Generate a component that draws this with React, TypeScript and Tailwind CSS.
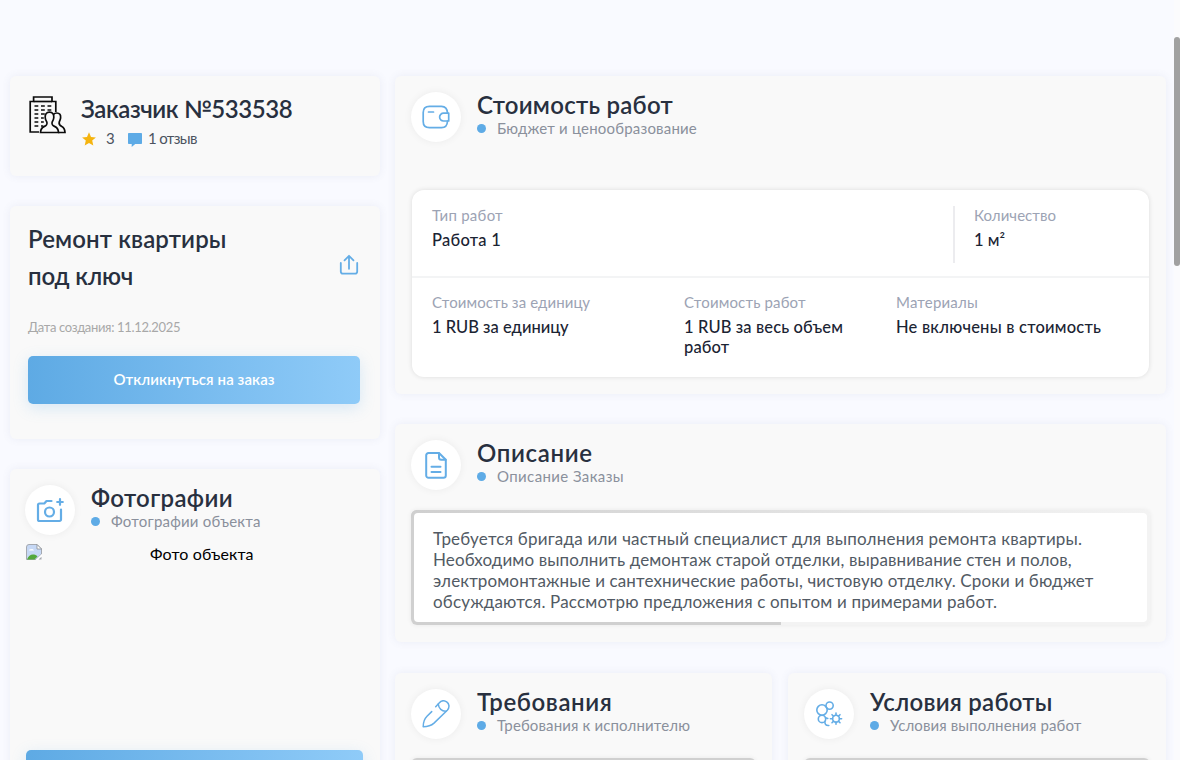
import type { ReactNode } from 'react'

const description = [
  { text: 'Требуется бригада или частный специалист для выполнения ремонта квартиры.', tracking: 'tracking-[0.21px]' },
  { text: 'Необходимо выполнить демонтаж старой отделки, выравнивание стен и полов,', tracking: 'tracking-[0.1px]' },
  { text: 'электромонтажные и сантехнические работы, чистовую отделку. Сроки и бюджет', tracking: 'tracking-[0.12px]' },
  { text: 'обсуждаются. Рассмотрю предложения с опытом и примерами работ.', tracking: 'tracking-[0.17px]' },
]

function BuildingIcon() {
  return (
    <svg width="40" height="40" viewBox="0 0 40 40" fill="none" stroke="#0b0b0b" strokeWidth="1.7">
      <path d="M11 37H2.200V6.500H5.600V2H24V6.500H27.800V17" />
      <path d="M5.600 6.500H24" />
      <path d="M6.500 11h3.800M13 11h3.800M19.500 11h3.800M6.500 15h3.800M13 15h3.800M19.500 15h3.800M6.500 19h3.800M13 19h3.800M6.500 23h3.800M13 23h2.800M6.500 27h3.800M13 27h2.800M6.500 31h3.800M13 31h2.300" strokeWidth="1.6" />
      <path d="M21.500 17.200c-3.200 0-4.600 2.300-4.300 5.300.2 2.500 1.200 3.500 1.700 4.800.5 2.600-.4 3.200-2.900 4.300-2.500 1.100-3.300 2.500-3.500 5.900H30.500c-.2-3.400-1-4.800-3.500-5.900-2.500-1.100-3.400-1.700-2.900-4.300.5-1.300 1.500-2.300 1.700-4.800.3-3-1.100-5.300-4.300-5.300Z" />
      <path d="M25.500 19.500c1-1.200 2.100-1.500 3.200-1.500 3 0 4.200 2 3.900 4.900-.2 2.100-1 3-1.400 4.300-.5 2.400.2 3.200 2.600 4.400 2.200 1.100 3 2.600 3.200 5.900H30" />
    </svg>
  )
}

function StarIcon() {
  return (
    <svg width="14" height="14" viewBox="0 0 14 14" fill="#f5b40f">
      <path d="M7 .3 9 5l4.900.4-3.700 3.200 1.100 4.900L7 10.900l-4.300 2.600 1.100-4.900L.1 5.400 5 5Z" />
    </svg>
  )
}

function CommentIcon() {
  return (
    <svg width="14" height="14" viewBox="0 0 14 14" fill="#5eabe6">
      <path d="M.8 0h12.400a.8.8 0 0 1 .8.800v9.400a.8.8 0 0 1-.8.800H7.200L3.700 14v-3H.8a.8.8 0 0 1-.8-.8V.8A.8.800 0 0 1 .8 0Z" />
    </svg>
  )
}

function ShareIcon() {
  return (
    <svg width="20" height="22" viewBox="0 0 20 22" fill="none" stroke="#64ade6" strokeWidth="1.800" strokeLinecap="round" strokeLinejoin="round">
      <path d="M1.800 9v8.500a2.200 2.200 0 0 0 2.200 2.200h12a2.200 2.200 0 0 0 2.200-2.200V9" />
      <path d="M10 14.800V2M5.500 6.300 10 1.800l4.500 4.500" />
    </svg>
  )
}

function WalletIcon() {
  return (
    <svg width="28" height="24" viewBox="0 0 28 24" fill="none" stroke="#64ade6" strokeWidth="1.700" strokeLinecap="round" strokeLinejoin="round">
      <path d="M25.500 8.200C25.300 3.500 23.800 1.300 19.500 1.300H7.500C3 1.300 1.200 3.200 1.200 7.500v9c0 4.300 1.800 6.200 6.300 6.200h12c4.300 0 5.800-2.100 6-6.700" />
      <path d="M26.700 8.200h-5.200a3.900 3.900 0 0 0 0 7.800h5.200Z" />
      <path d="M6.500 7h5" />
    </svg>
  )
}

function DocIcon() {
  return (
    <svg width="22" height="27" viewBox="0 0 22 27" fill="none" stroke="#64ade6" strokeWidth="2" strokeLinecap="round" strokeLinejoin="round">
      <path d="M14 1H3.500A2.300 2.300 0 0 0 1.200 3.300v20.200a2.300 2.300 0 0 0 2.300 2.300h15a2.300 2.300 0 0 0 2.300-2.300V7.800Z" />
      <path d="M14 1.200v4.300a2.300 2.300 0 0 0 2.300 2.300h4.300M6.500 14.800h9M6.500 19.900h9" />
    </svg>
  )
}

function CameraIcon() {
  return (
    <svg width="28" height="25" viewBox="0 0 28 25" fill="none" stroke="#64ade6" strokeWidth="2.200" strokeLinecap="round" strokeLinejoin="round">
      <path d="M15.500 3h-5L8.300 5.500H3.500A1.500 1.500 0 0 0 2 7v14.500A1.500 1.500 0 0 0 3.500 23h20a1.500 1.500 0 0 0 1.500-1.500V11.500" />
      <circle cx="13.500" cy="14" r="4.500" />
      <path d="M24 1.200v5.600M21.200 4h5.600" />
    </svg>
  )
}

function PencilIcon() {
  return (
    <svg width="28" height="28" viewBox="0 0 28 28" fill="none" stroke="#64ade6" strokeWidth="1.500" strokeLinecap="round" strokeLinejoin="round">
      <path d="M9.700 11.600 5 16.300C2.300 19 1.200 22.200 1.200 26.700c4.800 0 7.900-1 10.800-3.600L25.300 10.200c2.600-2.800 2-6.500-.6-8.300-2.600-1.700-5.700-1.100-7.600 1.100L13.700 6.700" />
      <path d="M16.300 4c.3 4.600 3.600 7.500 8 7.100" />
    </svg>
  )
}

function GearsIcon() {
  return (
    <svg width="28" height="26" viewBox="0 0 28 26" fill="none" stroke="#64ade6" strokeWidth="1.600" strokeLinecap="round">
      <circle cx="7" cy="9" r="5.200" />
      <circle cx="14.600" cy="4.600" r="3.600" />
      <circle cx="7" cy="17.900" r="3.700" />
      <path d="M10 20.200c-.6 2.800.9 4.600 3.800 4.300M10.500 16.800l2.300.6" />
      <circle cx="21" cy="17.700" r="3.400" />
      <path d="M21 14.300v-2.200M21 21.100v2.200M17.600 17.700h-2.200M24.400 17.700h2.200M18.600 15.300 17 13.700M23.400 15.300 25 13.700M18.600 20.100 17 21.700M23.400 20.100l1.600 1.600" />
    </svg>
  )
}

function BrokenImageIcon() {
  return (
    <svg width="16" height="16" viewBox="0 0 16 16">
      <path d="M3 .5h8l4.500 4.500v5L10 15.500H.5V3A2.500 2.500 0 0 1 3 .5Z" fill="#c6d8f5" stroke="#a5a9b0" />
      <path d="M3 6.500a1.500 1.500 0 0 1 2-1.200 2 2 0 0 1 3 1.200Z" fill="#fff" />
      <path d="M1 15.500c1.500-4 4-5.500 7-5 1.600.3 2.600 1 3.500 2L8.500 15.500Z" fill="#53a83c" />
      <path d="M11 .5V5h4.500Z" fill="#fff" stroke="#8b8f96" strokeWidth=".8" />
      <path d="m9.500 16 6.500-6v2l-4 4Z" fill="#fff" />
      <path d="M12.500 15.500h3v-2.800Z" fill="#a5a9b0" />
    </svg>
  )
}

function Card({ className = '', children }: { className?: string; children: ReactNode }) {
  return <section className={`shrink-0 rounded-md bg-[#f9f9f9] shadow-[0_0_8px_rgba(90,100,160,0.09)] ${className}`}>{children}</section>
}

type HeaderProps = { icon: ReactNode; title: string; subtitle: string; titleClass: string; subtitleClass: string }

function CardHeader({ icon, title, subtitle, titleClass, subtitleClass }: HeaderProps) {
  return (
    <div className="flex items-center gap-4">
      <div className="flex size-[50px] shrink-0 items-center justify-center rounded-full bg-white shadow-[0_0_8px_rgba(0,0,0,0.06)]">{icon}</div>
      <div className="-mt-1.5 whitespace-nowrap">
        <h2 className={`text-2xl leading-7 font-semibold text-[#28303f] ${titleClass}`}>{title}</h2>
        <p className={`flex items-center text-[15px] leading-[18px] text-[#8a909c] ${subtitleClass}`}>
          <span className="mr-[11px] size-[9px] rounded-full bg-[#5eabe6]" />
          {subtitle}
        </p>
      </div>
    </div>
  )
}

function Label({ className, children }: { className: string; children: ReactNode }) {
  return <p className={`-mt-px text-[15px] leading-5 text-[#9ca3b4] ${className}`}>{children}</p>
}

function Value({ className = '', children }: { className?: string; children: ReactNode }) {
  return <p className={`mt-[5px] text-[16.5px] leading-5 font-medium text-[#1b2433] ${className}`}>{children}</p>
}

function Sidebar() {
  return (
    <aside className="flex w-[370px] shrink-0 flex-col">
      <Card className="flex h-[100px] items-start pt-[19px] pl-[18px]">
        <BuildingIcon />
        <div className="pl-[13px]">
          <h1 className="text-2xl leading-7 font-semibold tracking-[-0.42px] text-[#28303f]">Заказчик №533538</h1>
          <div className="mt-[5px] flex items-center pl-px text-[15px] leading-5 text-[#4b5360]">
            <span className="mt-0.5"><StarIcon /></span>
            <span className="w-[22px] pl-2.5">3</span>
            <span className="mt-[3px] mr-1.5 ml-2.5"><CommentIcon /></span>
            <span className="tracking-[-0.65px]">1 отзыв</span>
          </div>
        </div>
      </Card>

      <Card className="mt-[30px] h-[233px] px-[18px] pt-3.5">
        <div className="flex items-center justify-between">
          <h2 className="text-2xl leading-[37px] font-semibold text-[#28303f]">
            <span className="block tracking-[0.12px]">Ремонт квартиры</span>
            <span className="block tracking-[-0.15px]">под ключ</span>
          </h2>
          <span className="mt-4 mr-[3px]"><ShareIcon /></span>
        </div>
        <p className="mt-[23px] text-[13px] leading-5 tracking-[-0.34px] text-[#a8a8a8]">Дата создания: 11.12.2025</p>
        <button className="mt-[19px] block h-12 w-[332px] rounded-[5px] bg-linear-to-r from-[#5eaae4] to-[#8fcbf8] pb-0.5 text-[15px] font-semibold tracking-[0.1px] text-white shadow-[0_4px_15px_rgba(94,171,230,0.22)]">
          Откликнуться на заказ
        </button>
      </Card>

      <Card className="mt-[30px] h-[400px] p-4">
        <div className="-ml-px">
          <CardHeader icon={<CameraIcon />} title="Фотографии" subtitle="Фотографии объекта" titleClass="tracking-[0.36px]" subtitleClass="tracking-[0.22px]" />
        </div>
        <div className="mt-[9px] flex h-[206px] items-start">
          <BrokenImageIcon />
          <span className="pl-[108px] text-base leading-5 tracking-[0.12px] text-black">Фото объекта</span>
        </div>
        <div className="h-12 w-[337px] rounded-[5px] bg-linear-to-r from-[#5eaae4] to-[#8fcbf8] shadow-[0_4px_15px_rgba(94,171,230,0.22)]" />
      </Card>
    </aside>
  )
}

function PriceCard() {
  return (
    <Card className="h-[318px] p-4">
      <CardHeader icon={<WalletIcon />} title="Стоимость работ" subtitle="Бюджет и ценообразование" titleClass="tracking-[0.26px]" subtitleClass="tracking-[0.2px]" />
      <div className="mt-12 mr-px ml-px h-[187px] rounded-xl bg-white shadow-[0_0_5px_rgba(0,0,0,0.12)]">
        <div className="flex h-[88px] items-start border-b-2 border-[#f3f4f5] pt-4 pl-5">
          <div className="h-[57px] w-[523px] border-r-2 border-[#ececef]">
            <Label className="tracking-[0.27px]">Тип работ</Label>
            <Value className="tracking-[0.25px]">Работа 1</Value>
          </div>
          <div className="pl-[19px]">
            <Label className="tracking-[0.05px]">Количество</Label>
            <Value>1 м²</Value>
          </div>
        </div>
        <div className="flex pt-[15px] pl-5">
          <div className="w-[252px]">
            <Label className="tracking-[0.09px]">Стоимость за единицу</Label>
            <Value>1 RUB за единицу</Value>
          </div>
          <div className="w-[212px] pr-8">
            <Label className="tracking-[0.15px]">Стоимость работ</Label>
            <Value className="tracking-[0.12px]">1 RUB за весь объем работ</Value>
          </div>
          <div>
            <Label className="tracking-[0.19px]">Материалы</Label>
            <Value className="tracking-[0.22px]">Не включены в стоимость</Value>
          </div>
        </div>
      </div>
    </Card>
  )
}

function DescriptionCard() {
  return (
    <Card className="mt-[30px] h-[218px] p-4">
      <CardHeader icon={<DocIcon />} title="Описание" subtitle="Описание Заказы" titleClass="tracking-[0.65px]" subtitleClass="tracking-[0.39px]" />
      {/* grey frame: strong on the left, fading along the top, cut halfway at the bottom */}
      <div className="relative mt-5 h-[115px] overflow-hidden rounded-md bg-[linear-gradient(to_right,#d0d0d0_50%,#f3f3f3_50%)] p-[3px] shadow-[0_0_5px_rgba(0,0,0,0.07)]">
        <div className="absolute inset-x-0 top-0 h-2 bg-linear-to-r from-[#cfcfcf] to-[#f3f3f3]" />
        <div className="relative h-full rounded-[4px] bg-white pt-[15px] pl-[19px]">
          {description.map((line) => (
            <p key={line.text} className={`text-[17px] leading-[21px] whitespace-nowrap text-[#525a64] ${line.tracking}`}>{line.text}</p>
          ))}
        </div>
      </div>
    </Card>
  )
}

function FramedBody() {
  return <div className="mt-[19px] h-40 rounded-md border-[3px] border-[#d0d0d0] bg-white shadow-[0_0_5px_rgba(0,0,0,0.07)]" />
}

export default function App() {
  return (
    <div className="relative flex h-[760px] w-[1180px] gap-[15px] overflow-hidden bg-[#f9faff] pt-[76px] pl-2.5 font-['Lato','Noto_Sans',sans-serif]">
      <Sidebar />
      <main className="w-[771px] shrink-0">
        <PriceCard />
        <DescriptionCard />
        <div className="mt-[31px] grid grid-cols-[377px_378px] gap-4">
          <Card className="p-4">
            <CardHeader icon={<PencilIcon />} title="Требования" subtitle="Требования к исполнителю" titleClass="tracking-[0.6px]" subtitleClass="tracking-[0.14px]" />
            <FramedBody />
          </Card>
          <Card className="p-4">
            <CardHeader icon={<GearsIcon />} title="Условия работы" subtitle="Условия выполнения работ" titleClass="tracking-[0.25px]" subtitleClass="tracking-[0.12px]" />
            <FramedBody />
          </Card>
        </div>
      </main>
      {/* scrollbar */}
      <div className="absolute inset-y-0 right-0 w-1.5 bg-[#fbfbfd]">
        <div className="mt-[37px] h-[229px] rounded-full bg-[#a1a1a1]" />
      </div>
    </div>
  )
}
